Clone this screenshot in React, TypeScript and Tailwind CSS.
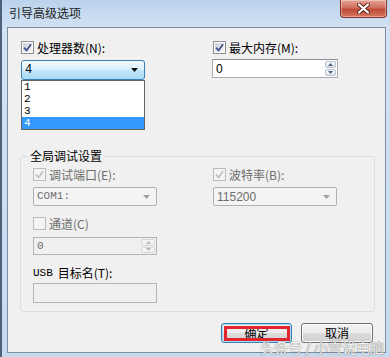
import clsx from "clsx"

const cjk = "font-['Noto_Sans_CJK_SC',sans-serif]"
const mono = "font-['Liberation_Mono','Noto_Sans_CJK_SC',monospace]"
const sans = "font-['Liberation_Sans',sans-serif]"

function CheckBox({ checked = false, disabled = false }: { checked?: boolean; disabled?: boolean }) {
  return (
    <span
      className={clsx(
        "flex h-[13px] w-[13px] shrink-0 border p-[1px]",
        disabled ? "border-[#bcbcbc] bg-[#f4f4f4]" : "border-[#8e8f8f] bg-white"
      )}
    >
      <span
        className={clsx(
          "flex h-full w-full items-center justify-center",
          disabled ? "bg-[#f4f4f4]" : "bg-[linear-gradient(135deg,#cdd1d7,#f7f7f7)]"
        )}
      >
        {checked && (
          <svg width="9" height="9" viewBox="0 0 9 9">
            <path
              d="M1 4.6 L3.6 7.4 L8 1.2"
              fill="none"
              stroke={disabled ? "#c2c2c2" : "#3f5289"}
              strokeWidth="1.8"
            />
          </svg>
        )}
      </span>
    </span>
  )
}

function Arrow({ color }: { color: string }) {
  return (
    <svg width="7" height="4" viewBox="0 0 7 4">
      <path d="M0 0 H7 L3.5 4 Z" fill={color} />
    </svg>
  )
}

function SpinButtons({ disabled = false, width }: { disabled?: boolean; width: string }) {
  const col = disabled ? "#b5b5b5" : "#4d6185"
  return (
    <div className={clsx("flex h-full flex-col gap-[1px] p-[1px]", width)}>
      {["M0 3 L2.5 0 L5 3 Z", "M0 0 H5 L2.5 3 Z"].map((d) => (
        <div
          key={d}
          className={clsx(
            "flex flex-1 items-center justify-center rounded-[2px] border",
            disabled
              ? "border-[#d6d6d6] bg-[#f4f4f4]"
              : "border-[#b9c3cf] bg-[linear-gradient(180deg,#f7f9fb,#dfe5ec)]"
          )}
        >
          <svg width="5" height="3" viewBox="0 0 5 3">
            <path d={d} fill={col} />
          </svg>
        </div>
      ))}
    </div>
  )
}

export default function App() {
  return (
    <div
      className={clsx(
        "relative h-[357px] w-[390px] overflow-hidden border-l-2 border-[#4d607a] bg-[linear-gradient(180deg,#bcd2ec,#d3e3f4_30px,#c5d9ef)] text-[12px] text-black",
        cjk
      )}
    >
      {/* title bar */}
      <div className="flex h-[27px] items-start justify-between">
        <span className="pl-[7px] pt-[5px] text-[12px] leading-[16px] text-[#1b1b1b]">引导高级选项</span>
        <button className="mr-[3px] flex h-[18px] w-[47px] items-center justify-center rounded-b-[4px] border border-t-0 border-[#8a3328] bg-[linear-gradient(180deg,#e7a396,#d0705e_45%,#c04a36_55%,#d27a62)] shadow-[inset_0_0_0_1px_rgba(255,255,255,0.35)]">
          <svg width="13" height="11" viewBox="0 0 13 11">
            <path d="M2 1.5 L11 9.5 M11 1.5 L2 9.5" stroke="#5a1f18" strokeWidth="4" strokeLinecap="round" />
            <path d="M2 1.5 L11 9.5 M11 1.5 L2 9.5" stroke="#ffffff" strokeWidth="2.2" strokeLinecap="round" />
          </svg>
        </button>
      </div>

      {/* client area */}
      <div className="ml-[5px] h-[326px] w-[379px] border border-[#7c8da2] bg-[#f0f0f0]">
        {/* processors / memory */}
        <div className="flex pl-[13px] pt-[13px]">
          <div className="w-[191px]">
            <label className="flex h-[13px] items-center gap-[3px]">
              <CheckBox checked />
              <span className="leading-[13px]">处理器数(N):</span>
            </label>
            <div className="relative mt-[6px] h-[20px] w-[124px]">
              <div className="flex h-full items-center justify-between rounded-[3px] border border-[#3c7fb1] bg-[linear-gradient(180deg,#f1f9fe,#dcf1fc_45%,#c2e6fa_55%,#a9d8f3)] pl-[3px] pr-[6px]">
                <span className={clsx(mono, "text-[12px] leading-[14px]")}>4</span>
                <Arrow color="#111" />
              </div>
              <ul className={clsx(mono, "absolute left-0 top-[20px] z-10 w-[124px] border border-[#646464] bg-white text-[11px] leading-[12px]")}>
                {["1", "2", "3", "4"].map((n) => (
                  <li key={n} className={clsx("h-[12px] pl-[2px]", n === "4" && "bg-[#3399ff] text-white")}>
                    {n}
                  </li>
                ))}
              </ul>
            </div>
          </div>
          <div>
            <label className="ml-[1px] flex h-[13px] items-center gap-[3px]">
              <CheckBox checked />
              <span className="leading-[13px]">最大内存(M):</span>
            </label>
            <div className="mt-[5px] flex h-[19px] w-[126px] items-center border border-[#abadb3] border-t-[#8b8e96] bg-white">
              <span className={clsx(sans, "flex-1 pl-[3px] text-[12px] leading-[14px]")}>0</span>
              <SpinButtons width="w-[13px]" />
            </div>
          </div>
        </div>

        {/* global debug settings */}
        <fieldset className="ml-[12px] mt-[68px] w-[355px] rounded-[3px] border border-[#d5dfe5] pb-[8px]">
          <legend className="ml-[7px] px-[2px] text-[12px] leading-[16px]">全局调试设置</legend>
          <div className="flex pl-[12px] pt-[4px]">
            <div className="w-[180px]">
              <label className="flex h-[13px] items-center gap-[3px] text-[#6d6d6d]">
                <CheckBox checked disabled />
                <span className="leading-[13px]">调试端口(E):</span>
              </label>
              <div className="mt-[6px] flex h-[19px] w-[124px] items-center justify-between rounded-[2px] border border-[#adb2b5] bg-[#f4f4f4] pl-[3px] pr-[6px]">
                <span className={clsx(mono, "text-[11px] leading-[13px] text-[#6d6d6d]")}>COM1:</span>
                <Arrow color="#a0a0a0" />
              </div>
            </div>
            <div>
              <label className="flex h-[13px] items-center gap-[3px] text-[#6d6d6d]">
                <CheckBox checked disabled />
                <span className="leading-[13px]">波特率(B):</span>
              </label>
              <div className="mt-[6px] flex h-[19px] w-[124px] items-center justify-between rounded-[2px] border border-[#adb2b5] bg-[#f4f4f4] pl-[3px] pr-[6px]">
                <span className={clsx(sans, "text-[12px] leading-[14px] text-[#6d6d6d]")}>115200</span>
                <Arrow color="#a0a0a0" />
              </div>
            </div>
          </div>
          <div className="pl-[12px]">
            <label className="mt-[11px] flex h-[13px] items-center gap-[3px] text-[#6d6d6d]">
              <CheckBox disabled />
              <span className="leading-[13px]">通道(C)</span>
            </label>
            <div className="mt-[7px] flex h-[18px] w-[124px] items-center border border-[#b5b5b5] bg-[#f0f0f0]">
              <span className={clsx(mono, "flex-1 pl-[3px] text-[11px] leading-[13px] text-[#6d6d6d]")}>0</span>
              <SpinButtons disabled width="w-[16px]" />
            </div>
            <div className="mt-[11px] flex h-[14px] items-center leading-[14px]">
              <span className={clsx(mono, "text-[11px]")}>USB</span>
              <span className="ml-[5px]">目标名(T):</span>
            </div>
            <div className="mt-[3px] h-[20px] w-[124px] border border-[#b5b5b5] bg-[#f0f0f0]" />
          </div>
        </fieldset>

        {/* buttons */}
        <div className="mt-[11px] flex justify-end gap-[9px] pr-[12px]">
          <button className="relative h-[20px] w-[71px] rounded-[3px] border border-[#3c7fb1] bg-[linear-gradient(180deg,#f2f2f2,#ebebeb_50%,#dddddd_50%,#cfcfcf)] text-[12px] leading-[16px] shadow-[inset_0_0_0_1px_#a6dcf8]">
            确定
            <span className="absolute bottom-[1px] left-[2px] right-[1px] top-[2px] border-[3px] border-[#e3262e]" />
          </button>
          <button className="h-[20px] w-[72px] rounded-[3px] border border-[#707070] bg-[linear-gradient(180deg,#f2f2f2,#ebebeb_50%,#dddddd_50%,#cfcfcf)] text-[12px] leading-[16px] shadow-[inset_0_0_0_1px_#fcfcfc]">
            取消
          </button>
        </div>
      </div>

      {/* watermark */}
      <span className="pointer-events-none absolute bottom-[1px] right-[6px] text-[14px] leading-[18px] text-white/90 [text-shadow:0_0_1px_#7a7a7a,0_0_1px_#7a7a7a]">
        头条号 / 小雪说电脑
      </span>
    </div>
  )
}
